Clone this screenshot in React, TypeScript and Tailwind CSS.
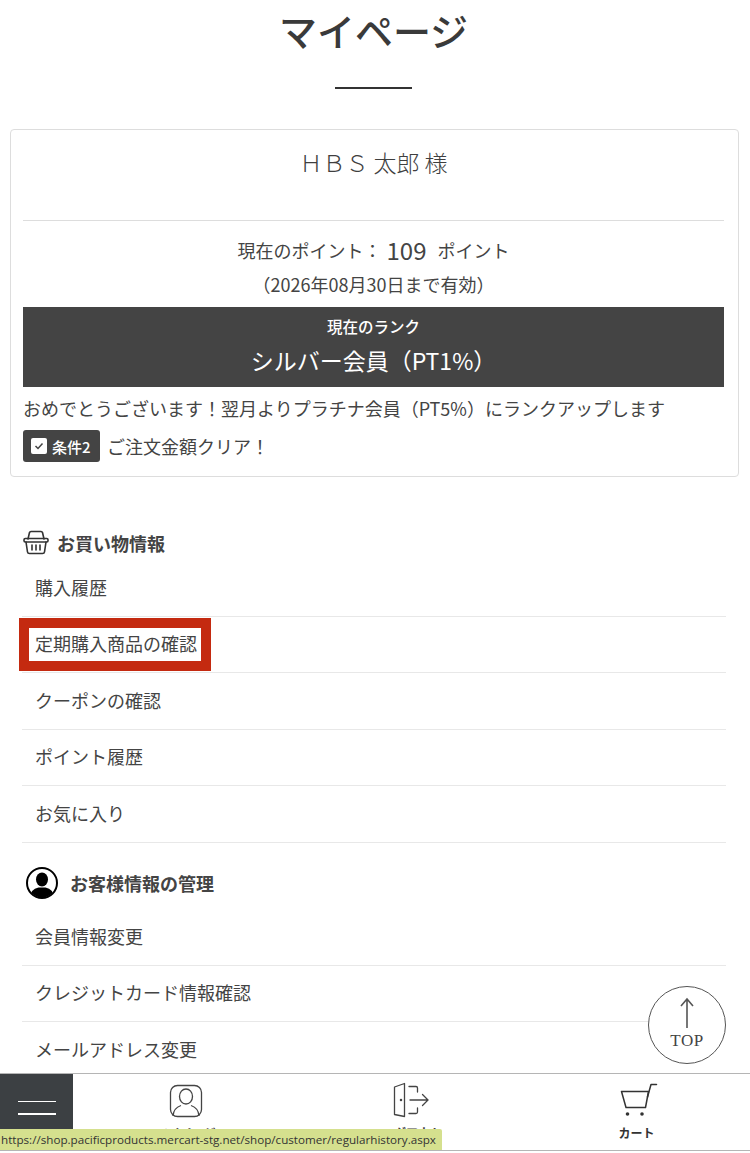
const font = { fontFamily: '"Noto Sans CJK JP", "Noto Sans", sans-serif' };

function Row({ label, highlight }: { label: string; highlight?: boolean }) {
  return (
    <div className="relative h-[56.5px] flex items-center pl-[13px] pb-[2px] border-b border-[#e8e8e8] text-[18px] leading-none text-[#444]">
      <span className="relative z-10">{label}</span>
      {highlight && (
        <div className="absolute left-[-3px] top-[1px] w-[192px] h-[53px] border-[10px] border-[#c42a10]" />
      )}
    </div>
  );
}

function Basket() {
  return (
    <svg width="26" height="25" viewBox="0 0 26 25" fill="none" stroke="#333" strokeWidth="1.6" strokeLinejoin="round" strokeLinecap="round">
      <path d="M5 9 L6.5 2.5 Q6.8 1.5 8 1.5 H18 Q19.2 1.5 19.5 2.5 L21 9" />
      <rect x="1" y="8.5" width="24" height="3.5" rx="1.2" />
      <path d="M3 12 L4.5 22 Q4.7 23.5 6.5 23.5 H19.5 Q21.3 23.5 21.5 22 L23 12" />
      <path d="M9 15 V20 M13 15 V20 M17 15 V20" />
    </svg>
  );
}

function UserCircle() {
  return (
    <svg width="32" height="32" viewBox="0 0 32 32">
      <defs>
        <clipPath id="uc"><circle cx="16" cy="16" r="14.5" /></clipPath>
      </defs>
      <circle cx="16" cy="16" r="15" fill="#fff" stroke="#000" strokeWidth="2" />
      <g clipPath="url(#uc)" fill="#000">
        <ellipse cx="16" cy="12.5" rx="6" ry="7" />
        <path d="M4 32 Q4 22 12.5 20.5 L19.5 20.5 Q28 22 28 32 Z" />
      </g>
    </svg>
  );
}

function NavUser() {
  return (
    <svg width="34" height="34" viewBox="0 0 34 34" fill="none" stroke="#444" strokeWidth="1.3">
      <rect x="1.5" y="1.5" width="31" height="31" rx="7" />
      <ellipse cx="17" cy="12.5" rx="6.5" ry="7.5" />
      <path d="M4 32 Q4.5 24 12 21.5 M30 32 Q29.5 24 22 21.5" />
    </svg>
  );
}

function NavLogout() {
  return (
    <svg width="38" height="36" viewBox="0 0 38 36" fill="none" stroke="#444" strokeWidth="1.3" strokeLinecap="round">
      <path d="M1.5 5 L11.5 1.5 V34.5 L1.5 32.5 Z" strokeLinejoin="round" />
      <circle cx="8" cy="18" r="0.6" fill="#444" />
      <path d="M16 4.5 H23 Q24.5 4.5 24.5 6 V10 M24.5 26 V30 Q24.5 31.5 23 31.5 H16" />
      <path d="M17 18 H35 M29.5 12.5 L35 18 L29.5 23.5" />
    </svg>
  );
}

function NavCart() {
  return (
    <svg width="38" height="34" viewBox="0 0 38 34" fill="none" stroke="#333" strokeWidth="1.5" strokeLinecap="round" strokeLinejoin="round">
      <path d="M1.5 8.5 H28.5 L25.5 24.5 H6 Z" />
      <path d="M27.5 14 L31 1.5 H36.5" />
      <circle cx="7.5" cy="31" r="1.8" fill="#333" stroke="none" />
      <circle cx="22" cy="31" r="1.8" fill="#333" stroke="none" />
    </svg>
  );
}

export default function App() {
  return (
    <div style={font} className="relative h-[1153px] w-[750px] overflow-hidden bg-white text-[#444]">
      <div className="w-[747px]">
        <h1 className="h-[61px] pt-[4px] text-center text-[38px] leading-[52px] font-medium text-[#3a3a3a]">
          マイページ
        </h1>
        <div className="mx-auto mt-[26px] h-[2px] w-[77px] bg-[#333]" />
      </div>

      <section className="ml-[10px] mt-[40px] h-[348px] w-[729px] rounded-[4px] border border-[#ddd] pl-[12px] pr-[14px]">
        <div className="h-[91px] border-b border-[#ddd] pt-[14px] text-center text-[23px] leading-[36px] font-light text-[#3f3f3f]">
          ＨＢＳ 太郎 様
        </div>
        <div className="mt-[7px] flex h-[44px] items-center justify-center text-[18px] leading-none">
          <span>現在のポイント：</span>
          <span className="ml-[5px] mr-[11px] text-[24px]">109</span>
          <span>ポイント</span>
        </div>
        <div className="h-[24px] text-center text-[18px] leading-[24px]">（2026年08月30日まで有効）</div>
        <div className="mt-[11px] flex h-[80px] flex-col items-center bg-[#444] text-white">
          <div className="mt-[9px] text-[15.5px] leading-[20px] font-medium">現在のランク</div>
          <div className="mt-[6px] text-[23px] leading-[36px]">シルバー会員（PT1%）</div>
        </div>
        <div className="mt-[9px] h-[24px] text-[18px] leading-[24px]">
          おめでとうございます！翌月よりプラチナ会員（PT5%）にランクアップします
        </div>
        <div className="mt-[10px] flex items-center">
          <div className="flex h-[32px] w-[77px] items-center rounded-[3px] bg-[#444] pl-[8px] text-white">
            <div className="flex h-[16px] w-[16px] items-center justify-center rounded-[2px] bg-white">
              <svg width="12" height="12" viewBox="0 0 12 12" fill="none" stroke="#444" strokeWidth="1.5">
                <path d="M2.5 6 L5 8.5 L9.5 3.5" />
              </svg>
            </div>
            <span className="ml-[5px] text-[15px] leading-none font-medium whitespace-nowrap">条件2</span>
          </div>
          <span className="ml-[7px] text-[18px] leading-none">ご注文金額クリア！</span>
        </div>
      </section>

      <section className="mx-[22px] mt-[53px] w-[704px]">
        <div className="flex h-[25px] items-center pl-[1px]">
          <Basket />
          <span className="ml-[8px] text-[18px] leading-none font-bold text-[#444]">お買い物情報</span>
        </div>
        <div className="h-[5px]" />
        <Row label="購入履歴" />
        <Row label="定期購入商品の確認" highlight />
        <Row label="クーポンの確認" />
        <Row label="ポイント履歴" />
        <Row label="お気に入り" />
      </section>

      <section className="mx-[22px] mt-[24px] w-[704px]">
        <div className="flex h-[32px] items-center pl-[4px]">
          <UserCircle />
          <span className="ml-[12px] text-[18px] leading-none font-bold text-[#444]">お客様情報の管理</span>
        </div>
        <div className="h-[10.5px]" />
        <Row label="会員情報変更" />
        <Row label="クレジットカード情報確認" />
        <Row label="メールアドレス変更" />
      </section>

      <div className="absolute left-[648px] top-[986px] z-20 flex h-[78px] w-[78px] flex-col items-center rounded-full border border-[#555] bg-white">
        <svg className="mt-[10px]" width="14" height="32" viewBox="0 0 14 32" fill="none" stroke="#555" strokeWidth="1.6">
          <path d="M7 31 V2 M1 9 L7 2 L13 9" />
        </svg>
        <span
          style={{ fontFamily: '"Liberation Serif", serif' }}
          className="mt-[2px] text-[17px] leading-[20px] tracking-[0.5px] text-[#444]"
        >
          TOP
        </span>
      </div>

      <nav className="absolute bottom-[2px] left-0 z-30 flex h-[78px] w-full border-y border-[#b5b5b5] bg-white">
        <div className="flex w-[73px] flex-col items-center bg-[#3c4043] text-white">
          <div className="mt-[27px] h-[1px] w-[38px] bg-white" />
          <div className="mt-[11px] h-[2px] w-[38px] bg-white" />
          <span className="mt-[10px] text-[12px] leading-[16px] font-bold">MENU</span>
        </div>
        <div className="flex flex-1 flex-col items-center pl-[2px] pt-[10px]">
          <NavUser />
          <span className="mt-[7px] text-[12px] leading-[16px] font-bold">マイページ</span>
        </div>
        <div className="flex flex-1 flex-col items-center pl-[4px] pt-[8px]">
          <NavLogout />
          <span className="mt-[7px] text-[12px] leading-[16px] font-bold">ログアウト</span>
        </div>
        <div className="flex flex-1 flex-col items-center pl-[5px] pt-[9px]">
          <NavCart />
          <span className="mr-[5px] mt-[8px] text-[12px] leading-[16px] font-bold text-[#333]">カート</span>
        </div>
      </nav>

      <div
        style={{ fontFamily: '"Open Sans", "Noto Sans", sans-serif' }}
        className="absolute left-0 top-[1129px] z-40 flex h-[21px] w-[442px] items-center rounded-tr-[2px] bg-[#d5e08e] pl-[1px] text-[11.65px] leading-none whitespace-nowrap text-[#333]"
      >
        https://shop.pacificproducts.mercart-stg.net/shop/customer/regularhistory.aspx
      </div>
    </div>
  );
}
